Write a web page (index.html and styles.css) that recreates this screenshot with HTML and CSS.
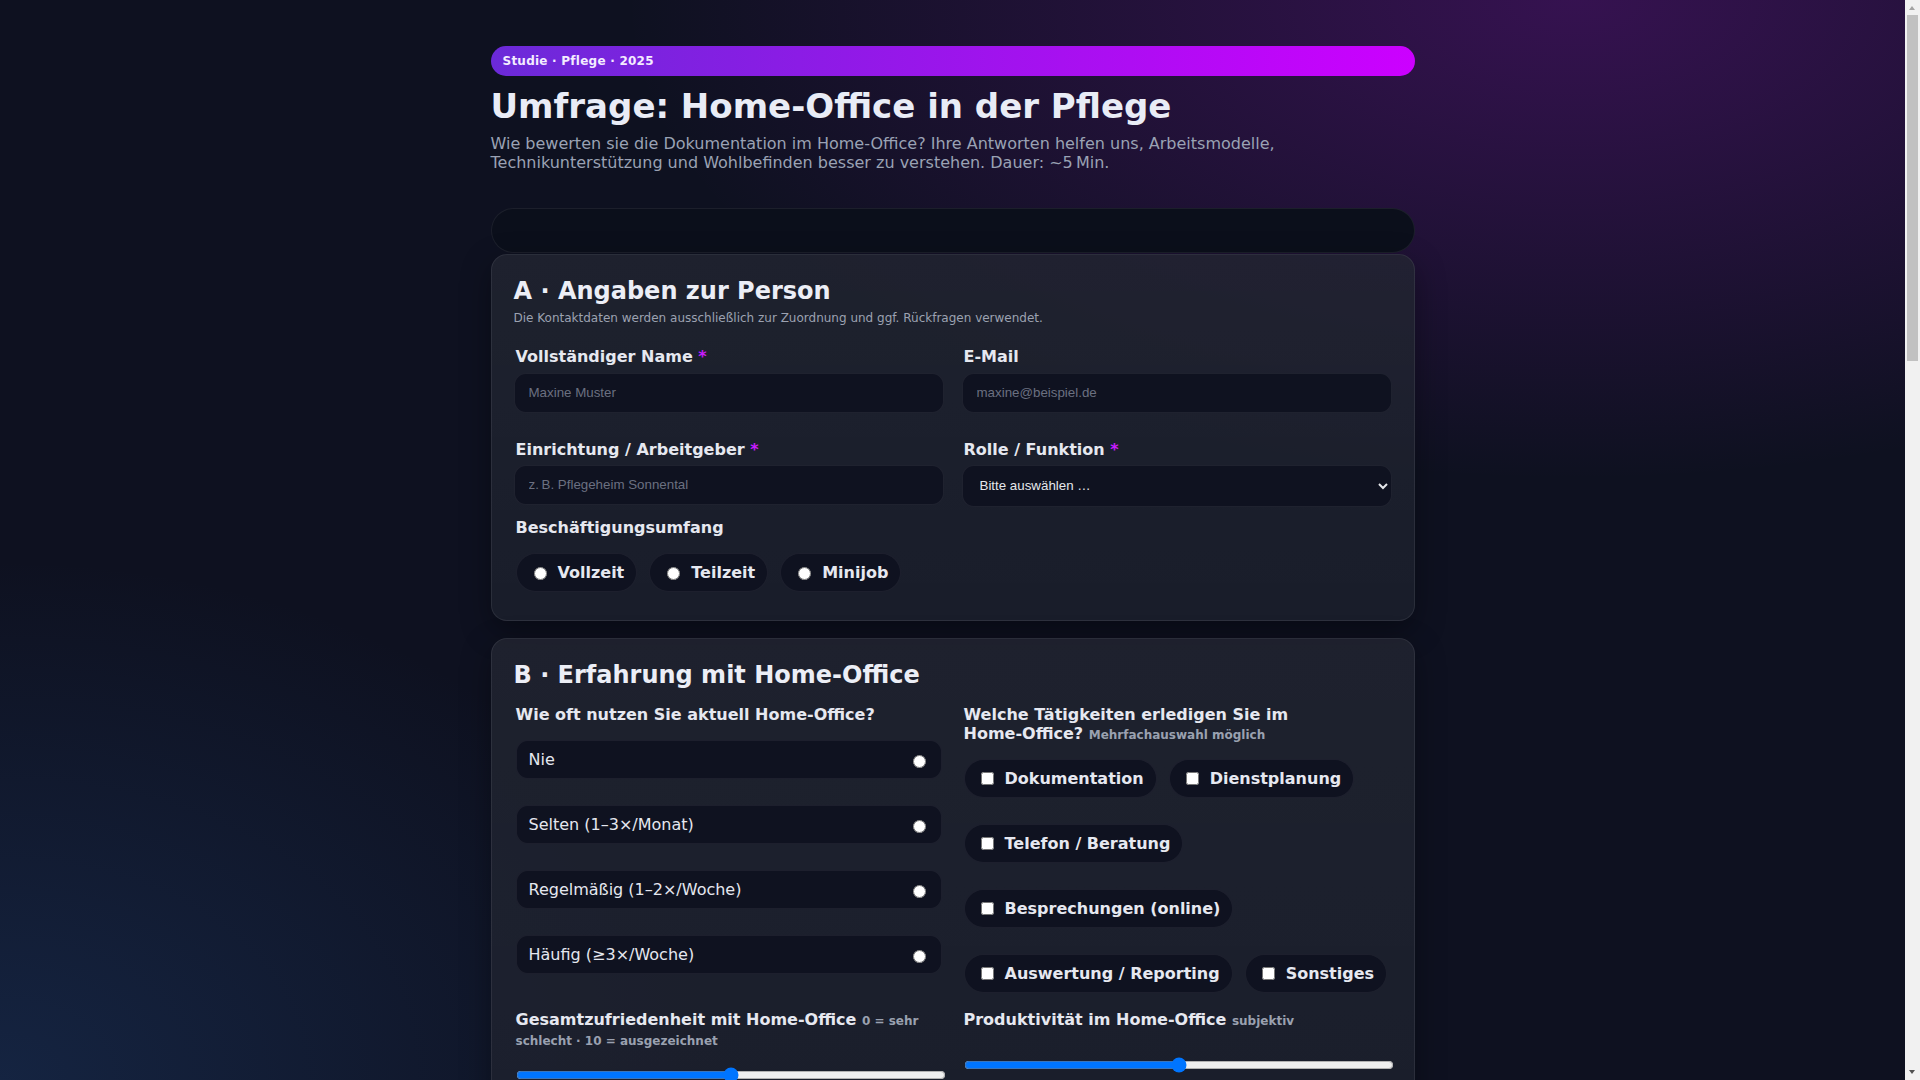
FILE: index.html
```html
<!DOCTYPE html>
<html lang="de">
<head>
<meta charset="utf-8">
<title>Umfrage: Home-Office in der Pflege</title>
<link rel="stylesheet" href="styles.css">
</head>
<body>
<main class="wrap">
  <header class="hero">
    <div class="badge">Studie · Pflege · 2025</div>
    <h1 class="title">Umfrage: Home-Office in der Pflege</h1>
    <p class="lead">Wie bewerten sie die Dokumentation im Home-Office? Ihre Antworten helfen uns, Arbeitsmodelle, Technikunterstützung und Wohlbefinden besser zu verstehen. Dauer: ~5&#8239;Min.</p>
  </header>

  <div class="progress" role="progressbar" aria-valuemin="0" aria-valuemax="100" aria-valuenow="0"><div class="progress-fill" style="width:0%"></div></div>

  <form class="survey">
    <section class="card">
      <h2 class="card-title">A · Angaben zur Person</h2>
      <p class="card-desc">Die Kontaktdaten werden ausschließlich zur Zuordnung und ggf. Rückfragen verwendet.</p>
      <div class="grid">
        <div class="field field--spaced">
          <label class="label" for="name">Vollständiger Name <span class="req">*</span></label>
          <input class="input" id="name" type="text" placeholder="Maxine Muster">
        </div>
        <div class="field field--spaced">
          <label class="label" for="mail">E-Mail</label>
          <input class="input" id="mail" type="email" placeholder="maxine@beispiel.de">
        </div>
        <div class="field">
          <label class="label" for="org">Einrichtung / Arbeitgeber <span class="req">*</span></label>
          <input class="input" id="org" type="text" placeholder="z.&#8239;B. Pflegeheim Sonnental">
        </div>
        <div class="field">
          <label class="label" for="role">Rolle / Funktion <span class="req">*</span></label>
          <select class="input select" id="role">
            <option>Bitte auswählen …</option>
            <option>Pflegefachkraft</option>
            <option>Pflegehilfskraft</option>
            <option>Stations- / Wohnbereichsleitung</option>
            <option>Pflegedienstleitung</option>
            <option>Verwaltung</option>
          </select>
        </div>
        <div class="field field--full">
          <span class="label">Beschäftigungsumfang</span>
          <div class="opts chips">
            <label class="chip"><input type="radio" name="umfang">Vollzeit</label>
            <label class="chip"><input type="radio" name="umfang">Teilzeit</label>
            <label class="chip"><input type="radio" name="umfang">Minijob</label>
          </div>
        </div>
      </div>
    </section>

    <section class="card">
      <h2 class="card-title">B · Erfahrung mit Home-Office</h2>
      <div class="grid">
        <div class="field">
          <span class="label">Wie oft nutzen Sie aktuell Home-Office?</span>
          <div class="opts rows">
            <label class="row"><span>Nie</span><input type="radio" name="freq"></label>
            <label class="row"><span>Selten (1–3×/Monat)</span><input type="radio" name="freq"></label>
            <label class="row"><span>Regelmäßig (1–2×/Woche)</span><input type="radio" name="freq"></label>
            <label class="row"><span>Häufig (≥3×/Woche)</span><input type="radio" name="freq"></label>
          </div>
        </div>
        <div class="field">
          <span class="label">Welche Tätigkeiten erledigen Sie im <span class="nowrap">Home-Office?</span> <span class="hint">Mehrfachauswahl möglich</span></span>
          <div class="opts chips">
            <label class="chip"><input type="checkbox">Dokumentation</label>
            <label class="chip"><input type="checkbox">Dienstplanung</label>
            <label class="chip"><input type="checkbox">Telefon / Beratung</label>
            <label class="chip"><input type="checkbox">Besprechungen (online)</label>
            <label class="chip"><input type="checkbox">Auswertung / Reporting</label>
            <label class="chip"><input type="checkbox">Sonstiges</label>
          </div>
        </div>
        <div class="field">
          <label class="label" for="zufr">Gesamtzufriedenheit mit Home-Office <span class="hint">0 = sehr schlecht · 10 = ausgezeichnet</span></label>
          <div class="range-wrap">
            <input class="range" id="zufr" type="range" min="0" max="10" value="5">
          </div>
        </div>
        <div class="field">
          <label class="label" for="prod">Produktivität im Home-Office <span class="hint">subjektiv</span></label>
          <div class="range-wrap range-wrap--single">
            <input class="range" id="prod" type="range" min="0" max="100" value="50">
          </div>
        </div>
        <div class="field field--full">
          <label class="label" for="huerden">Welche Hürden erleben Sie im Home-Office?</label>
          <textarea class="input textarea" id="huerden" placeholder="z.&#8239;B. fehlender Zugriff auf Akten, instabile Verbindung …"></textarea>
        </div>
      </div>
    </section>

    <section class="card">
      <h2 class="card-title">C · Technik &amp; Ausstattung</h2>
      <p class="card-desc">Angaben zur technischen Ausstattung und zum Zugriff auf die Dokumentationssysteme.</p>
      <div class="grid">
        <div class="field">
          <span class="label">Welche Geräte nutzen Sie?</span>
          <div class="opts chips">
            <label class="chip"><input type="checkbox">Dienst-Laptop</label>
            <label class="chip"><input type="checkbox">Privater PC</label>
            <label class="chip"><input type="checkbox">Tablet</label>
            <label class="chip"><input type="checkbox">Smartphone</label>
            <label class="chip"><input type="checkbox">Headset</label>
          </div>
        </div>
        <div class="field">
          <span class="label">Zugriff auf die Pflegedokumentation</span>
          <div class="opts rows">
            <label class="row"><span>Problemlos</span><input type="radio" name="vpn"></label>
            <label class="row"><span>Gelegentliche Probleme</span><input type="radio" name="vpn"></label>
            <label class="row"><span>Häufige Probleme</span><input type="radio" name="vpn"></label>
          </div>
        </div>
        <div class="field">
          <label class="label" for="net">Stabilität der Internetverbindung</label>
          <select class="input select" id="net">
            <option>Bitte auswählen …</option>
            <option>Sehr stabil</option>
            <option>Meist stabil</option>
            <option>Instabil</option>
          </select>
        </div>
        <div class="field">
          <label class="label" for="it">Unterstützung durch die IT <span class="hint">0 = keine · 10 = sehr gut</span></label>
          <div class="range-wrap">
            <input class="range" id="it" type="range" min="0" max="10" value="5">
          </div>
        </div>
      </div>
    </section>

    <section class="card">
      <h2 class="card-title">D · Wohlbefinden &amp; Belastung</h2>
      <div class="grid">
        <div class="field">
          <span class="label">Wie hat sich Ihre Work-Life-Balance verändert?</span>
          <div class="opts rows">
            <label class="row"><span>Deutlich verbessert</span><input type="radio" name="wlb"></label>
            <label class="row"><span>Etwas verbessert</span><input type="radio" name="wlb"></label>
            <label class="row"><span>Unverändert</span><input type="radio" name="wlb"></label>
            <label class="row"><span>Verschlechtert</span><input type="radio" name="wlb"></label>
          </div>
        </div>
        <div class="field">
          <span class="label">Fühlen Sie sich im Home-Office isoliert?</span>
          <div class="opts chips">
            <label class="chip"><input type="radio" name="iso">Nie</label>
            <label class="chip"><input type="radio" name="iso">Manchmal</label>
            <label class="chip"><input type="radio" name="iso">Oft</label>
          </div>
        </div>
        <div class="field field--full">
          <label class="label" for="stress">Empfundene Belastung <span class="hint">0 = gering · 10 = sehr hoch</span></label>
          <div class="range-wrap">
            <input class="range" id="stress" type="range" min="0" max="10" value="5">
          </div>
        </div>
      </div>
    </section>

    <section class="card">
      <h2 class="card-title">E · Abschluss</h2>
      <p class="card-desc">Vielen Dank für Ihre Teilnahme! Sie können uns hier noch Anmerkungen mitgeben.</p>
      <div class="grid">
        <div class="field field--full">
          <label class="label" for="notes">Anmerkungen &amp; Wünsche</label>
          <textarea class="input textarea" id="notes" placeholder="Ihre Nachricht …"></textarea>
        </div>
        <div class="field field--full">
          <div class="opts chips">
            <label class="chip"><input type="checkbox">Ich stimme der Verarbeitung meiner Angaben zu. <span class="req">*</span></label>
          </div>
        </div>
      </div>
      <div class="actions">
        <button class="btn btn--ghost" type="reset">Zurücksetzen</button>
        <button class="btn btn--primary" type="submit">Absenden</button>
      </div>
    </section>
  </form>

  <footer class="foot">© 2025 · Forschungsprojekt Pflege digital · Alle Angaben werden anonymisiert ausgewertet.</footer>
</main>

<div class="scrollbar" aria-hidden="true">
  <span class="sb-btn sb-btn--up"></span>
  <span class="sb-thumb"></span>
  <span class="sb-btn sb-btn--down"></span>
</div>
</body>
</html>
```

FILE: styles.css
```css
* { box-sizing: border-box; }

html {
  height: 100%;
  background:
    radial-gradient(ellipse 950px 480px at 82% 0%, rgba(160, 20, 210, 0.27), rgba(160, 20, 210, 0) 100%),
    radial-gradient(ellipse 720px 520px at 0% 100%, rgba(40, 90, 160, 0.26), rgba(40, 90, 160, 0) 100%),
    #0e1120;
}

body {
  height: 100%;
  margin: 0;
  padding-right: 15px;
  overflow-y: auto;
  font-family: "DejaVu Sans", "Noto Sans", sans-serif;
  color: #e6e9f2;
}

/* classic light scrollbar (drawn) */
.scrollbar {
  position: fixed;
  top: 0;
  right: 0;
  width: 15px;
  height: 100vh;
  background: #f1f1f1;
  z-index: 10;
}

.sb-btn {
  position: absolute;
  left: 0;
  width: 15px;
  height: 15px;
}

.sb-btn--up { top: 0; }
.sb-btn--down { bottom: 0; }

.sb-btn::before {
  content: "";
  position: absolute;
  left: 4px;
  width: 0;
  height: 0;
  border-left: 3.5px solid transparent;
  border-right: 3.5px solid transparent;
}

.sb-btn--up::before {
  top: 6px;
  border-bottom: 4px solid #a3a3a3;
}

.sb-btn--down::before {
  top: 5px;
  border-top: 4px solid #505050;
}

.sb-thumb {
  position: absolute;
  top: 15px;
  left: 2px;
  width: 11px;
  height: 346px;
  background: #c1c1c1;
}

.wrap {
  max-width: 924px;
  margin: 0 auto;
  padding: 46px 0 60px;
}

.nowrap { white-space: nowrap; }

/* Header */
.badge {
  height: 30px;
  line-height: 30px;
  padding: 0 12px;
  border-radius: 999px;
  background: linear-gradient(90deg, #6b2ad8 0%, #cc00ff 100%);
  color: #f3ecff;
  font-size: 12px;
  font-weight: bold;
  letter-spacing: 0.02em;
}

.title {
  margin: 10px 0 8px;
  font-size: 34px;
  line-height: normal;
  font-weight: bold;
  color: #e9ecf6;
}

.lead {
  max-width: 820px;
  margin: 0 0 36px;
  font-size: 16px;
  line-height: 1.2;
  color: #9aa2b4;
}

.progress {
  height: 45px;
  margin-bottom: 1px;
  border-radius: 999px;
  background: #0b0f1b;
  border: 1px solid rgba(255, 255, 255, 0.07);
  overflow: hidden;
}

.progress-fill {
  height: 100%;
  background: linear-gradient(90deg, #6b2ad8, #cc00ff);
}

/* Cards */
.card {
  margin-bottom: 17px;
  padding: 22px;
  border: 1px solid rgba(255, 255, 255, 0.075);
  border-radius: 16px;
  background:
    linear-gradient(180deg, rgba(255, 255, 255, 0.02), rgba(255, 255, 255, 0)),
    rgba(29, 32, 45, 0.8);
  box-shadow: 0 10px 30px rgba(0, 0, 0, 0.35);
}

.card-title {
  margin: 0 0 16px;
  font-size: 24px;
  line-height: normal;
  font-weight: bold;
  color: #eceef6;
}

.card-desc {
  margin: -10px 0 22px;
  font-size: 12px;
  line-height: normal;
  color: #9ca2b1;
}

.grid {
  display: grid;
  grid-template-columns: 1fr 1fr;
  column-gap: 18px;
  row-gap: 11px;
}

.field { min-width: 0; }
.field--full { grid-column: 1 / -1; }
.field--spaced { margin-bottom: 16px; }

.label {
  display: block;
  margin-bottom: 6px;
  padding-left: 2px;
  font-size: 16px;
  line-height: 1.2;
  font-weight: bold;
  color: #e6e8f0;
}

.req { color: #c81cff; }

.hint {
  font-size: 12px;
  font-weight: bold;
  color: #9aa1b0;
}

/* Inputs */
.input {
  display: block;
  width: 100%;
  height: 40px;
  margin: 0;
  padding: 0 14px;
  border: 1px solid rgba(255, 255, 255, 0.07);
  border-radius: 12px;
  background: #0f1220;
  color: #e5e7eb;
  font-family: "Liberation Sans", Arial, sans-serif;
  font-size: 13.333px;
  outline: none;
}

.input::placeholder { color: #6b7080; }

.select {
  height: 42px;
  padding: 0 13px;
}

.textarea {
  height: 110px;
  padding: 12px 14px;
  resize: vertical;
}

/* Option groups */
.opts {
  margin: 0 2px;
  padding: 10px 0 6px;
}

.chips {
  display: flex;
  flex-wrap: wrap;
  column-gap: 12px;
  row-gap: 26px;
}

.chip {
  display: inline-flex;
  align-items: center;
  gap: 8px;
  height: 39px;
  padding: 0 12px;
  border: 1px solid rgba(255, 255, 255, 0.06);
  border-radius: 999px;
  background: #0f1220;
  font-size: 16px;
  font-weight: bold;
  color: #e6e8f0;
}

.rows {
  display: flex;
  flex-direction: column;
  gap: 26px;
}

.row {
  display: flex;
  align-items: center;
  justify-content: space-between;
  height: 39px;
  padding: 0 12px;
  border: 1px solid rgba(255, 255, 255, 0.06);
  border-radius: 12px;
  background: #0f1220;
  font-size: 16px;
  color: #e5e7ef;
}

/* Range */
.range-wrap { padding-top: 10px; }
.range-wrap--single { padding-top: 19px; }

.range {
  display: block;
  width: 100%;
}

/* Actions */
.actions {
  display: flex;
  justify-content: flex-end;
  gap: 12px;
  margin-top: 20px;
}

.btn {
  height: 42px;
  padding: 0 22px;
  border-radius: 999px;
  font-family: "DejaVu Sans", sans-serif;
  font-size: 15px;
  font-weight: bold;
  cursor: pointer;
}

.btn--ghost {
  border: 1px solid rgba(255, 255, 255, 0.12);
  background: #0f1220;
  color: #e5e7ef;
}

.btn--primary {
  border: 0;
  background: linear-gradient(90deg, #6b2ad8, #cc00ff);
  color: #fff;
}

.foot {
  padding: 24px 0 0;
  font-size: 12px;
  color: #7c8294;
  text-align: center;
}
```
